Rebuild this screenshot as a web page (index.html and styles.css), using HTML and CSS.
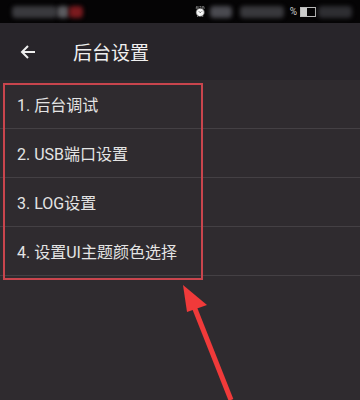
FILE: index.html
```html
<!DOCTYPE html>
<html lang="zh-CN">
<head>
    <meta charset="UTF-8">
    <meta name="viewport" content="width=device-width, initial-scale=1.0">
    <title>后台设置</title>
    <link rel="stylesheet" href="styles.css">
</head>
<body>
    <div class="status">
        <div class="status-left">
            <span class="blob blob-a"></span>
            <span class="blob blob-b"></span>
            <span class="blob blob-red"></span>
        </div>
        <div class="status-right">
            <span class="alarm">⏰</span>
            <span class="blob blob-c"></span>
            <span class="blob blob-d"></span>
            <span class="pct">%</span>
            <span class="batt"></span>
            <span class="blob blob-e"></span>
        </div>
    </div>

    <div class="toolbar">
        <svg class="back" width="18" height="18" viewBox="0 0 18 18">
            <path d="M16 9H3M9 3L3 9l6 6" fill="none" stroke="#eeeeee" stroke-width="2"/>
        </svg>
        <span class="title">后台设置</span>
    </div>

    <div class="list">
        <div class="row">1. 后台调试</div>
        <div class="row">2. USB端口设置</div>
        <div class="row">3. LOG设置</div>
        <div class="row">4. 设置UI主题颜色选择</div>

        <div class="mark"></div>
        <svg class="arrow" width="80" height="120" viewBox="0 0 80 120">
            <path d="M71 120L33 24" stroke="#f03a3a" stroke-width="5" fill="none"/>
            <path d="M23 5L47 25L27 32Z" fill="#f03a3a"/>
        </svg>
    </div>
</body>
</html>
```

FILE: styles.css
```css
body {
    margin: 0;
    width: 360px;
    height: 400px;
    overflow: hidden;
    background-color: #2f2b2f;
    font-family: Roboto, "Noto Sans CJK SC", sans-serif;
}

.status {
    height: 23px;
    background-color: #050405;
    display: flex;
    justify-content: space-between;
    align-items: center;
    padding: 0 6px;
}

.status-left,
.status-right {
    display: flex;
    align-items: center;
}

.blob {
    display: inline-block;
    height: 12px;
    border-radius: 4px;
    filter: blur(2px);
}

.blob-a { width: 45px; background-color: #3a3a3e; margin-left: 6px; }
.blob-b { width: 12px; background-color: #5a5a5e; }
.blob-red { width: 14px; background-color: #7a1a1e; }
.blob-c { width: 22px; background-color: #4a4a50; margin: 0 8px 0 4px; }
.blob-d { width: 44px; background-color: #38383c; margin-right: 6px; }
.blob-e { width: 34px; background-color: #2e2e32; margin: 0 2px; }

.alarm {
    font-size: 10px;
    color: #bbbbbb;
    filter: grayscale(1);
}

.pct {
    font-size: 10px;
    color: #cccccc;
    margin-right: 3px;
}

.batt {
    width: 14px;
    height: 8px;
    border: 1px solid #bbbbbb;
    background: linear-gradient(to right, #cccccc 45%, transparent 45%);
}

.toolbar {
    height: 57px;
    background-color: #28252a;
    display: flex;
    align-items: center;
    padding-left: 19px;
}

.back {
    margin-right: 36px;
}

.title {
    font-size: 19px;
    color: #f0f0f0;
}

.list {
    position: relative;
}

.row {
    height: 48px;
    border-bottom: 1px solid #444044;
    display: flex;
    align-items: center;
    padding-left: 17px;
    font-size: 16px;
    color: #e4e4e4;
}

.mark {
    position: absolute;
    left: 3px;
    top: 3px;
    width: 196px;
    height: 193px;
    border: 2px solid #c9454d;
}

.arrow {
    position: absolute;
    left: 160px;
    top: 200px;
}
```
